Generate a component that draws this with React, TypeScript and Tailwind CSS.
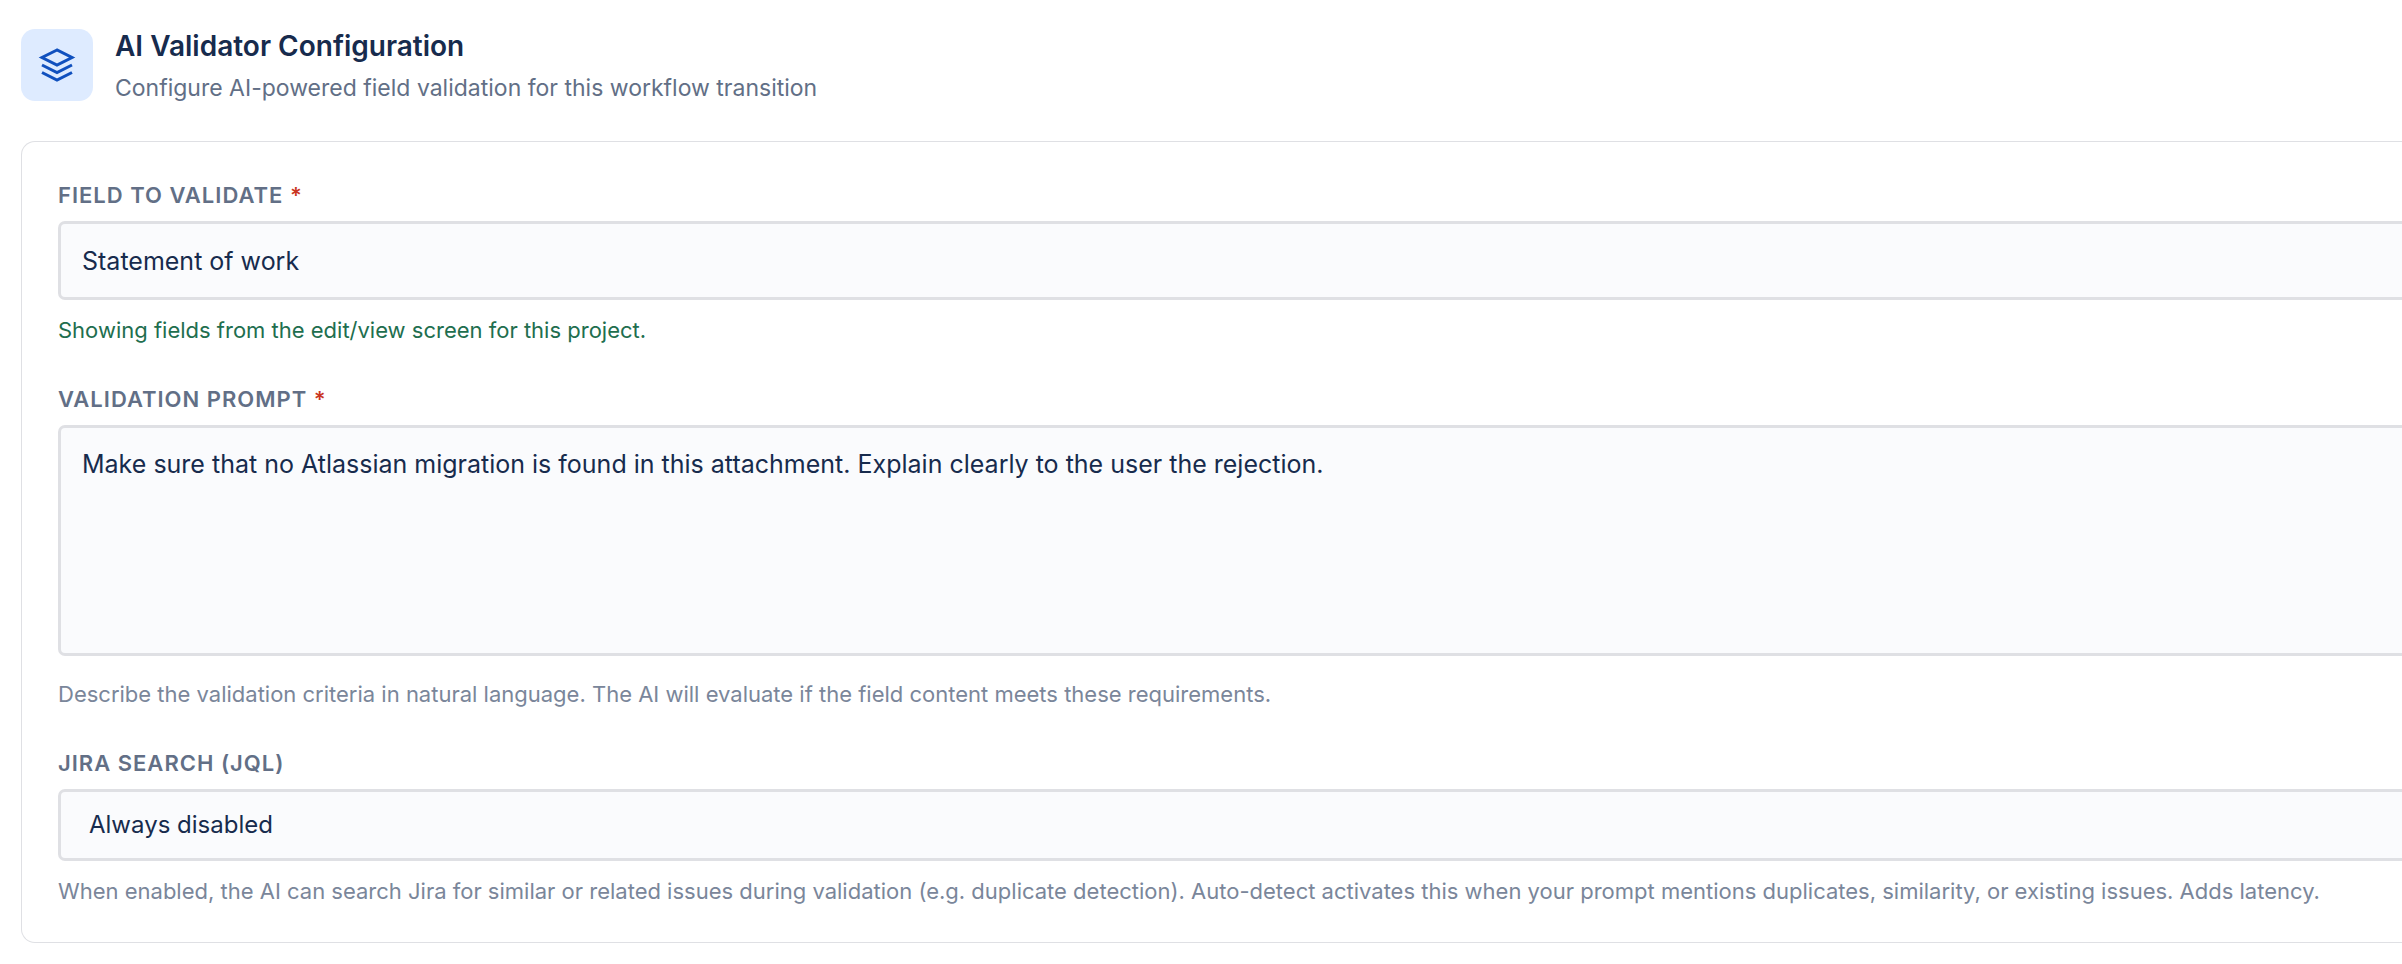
import { useState } from 'react';
import type { ReactNode } from 'react';

interface FieldProps {
  id: string;
  label: string;
  required?: boolean;
  children: ReactNode;
}

const controlClass =
  'block w-full rounded-l-[7px] border-[3px] border-r-0 border-[#dfe0e4] bg-[#fafbfd] leading-[36px] text-[#172b4d] outline-none';

const LayersIcon = () => (
  <svg width="36" height="36" viewBox="0 0 24 24" fill="none" stroke="#1050be" strokeWidth="2" className="overflow-visible">
    <path d="M12 2L2 7l10 5 10-5-10-5z" />
    <path d="M2 12l10 5 10-5" />
    <path d="M2 17l10 5 10-5" />
  </svg>
);

const Field = ({ id, label, required, children }: FieldProps) => (
  <div>
    <label
      htmlFor={id}
      className="mb-[9px] block text-[22px] leading-[34px] font-semibold tracking-[1px] text-[#626f86] uppercase"
    >
      {label}
      {required && <span className="text-[#ca3521]"> *</span>}
    </label>
    {children}
  </div>
);

const App = () => {
  const [field, setField] = useState('Statement of work');
  const [prompt, setPrompt] = useState(
    'Make sure that no Atlassian migration is found in this attachment. Explain clearly to the user the rejection.'
  );
  const [jql, setJql] = useState('disabled');

  return (
    <div className="min-h-screen overflow-hidden bg-white pt-[26px] pl-[21px] font-['Inter',sans-serif]">
      <header className="mb-[37px] flex items-center gap-[22px]">
        <div className="flex size-[72px] items-center justify-center rounded-[14px] bg-[#deebff]">
          <LayersIcon />
        </div>
        <div>
          <h1 className="text-[28px] leading-[40px] font-semibold text-[#172b4d]">AI Validator Configuration</h1>
          <p className="mt-[6px] text-[23px] leading-[32px] text-[#626f86]">
            Configure AI-powered field validation for this workflow transition
          </p>
        </div>
      </header>

      <form className="flex flex-col gap-9 rounded-l-[14px] border border-r-0 border-[#dfe0e4] pt-9 pb-[35px] pl-9">
        <Field id="field" label="Field to validate" required>
          <input
            id="field"
            type="text"
            value={field}
            onChange={(e) => setField(e.target.value)}
            className={`${controlClass} h-[79px] pl-[21px] text-[25px]`}
          />
          <p className="mt-[14px] text-[22px] leading-[32px] text-[#216e4e]">
            Showing fields from the edit/view screen for this project.
          </p>
        </Field>

        <Field id="prompt" label="Validation prompt" required>
          <textarea
            id="prompt"
            value={prompt}
            onChange={(e) => setPrompt(e.target.value)}
            className={`${controlClass} h-[231px] resize-none pt-[18px] pl-[21px] text-[25px]`}
          />
          <p className="mt-[22px] text-[22px] leading-[32px] text-[#7a869a]">
            Describe the validation criteria in natural language. The AI will evaluate if the field content meets these
            requirements.
          </p>
        </Field>

        <Field id="jql" label="Jira search (JQL)">
          <select
            id="jql"
            value={jql}
            onChange={(e) => setJql(e.target.value)}
            className={`${controlClass} h-[72px] appearance-none pl-[28px] text-[24px]`}
          >
            <option value="disabled">Always disabled</option>
            <option value="auto">Auto-detect</option>
            <option value="enabled">Always enabled</option>
          </select>
          <p className="mt-[14px] text-[22px] leading-[32px] text-[#7a869a]">
            When enabled, the AI can search Jira for similar or related issues during validation (e.g. duplicate
            detection). Auto-detect activates this when your prompt mentions duplicates, similarity, or existing issues.
            Adds latency.
          </p>
        </Field>
      </form>
    </div>
  );
};

export default App;
